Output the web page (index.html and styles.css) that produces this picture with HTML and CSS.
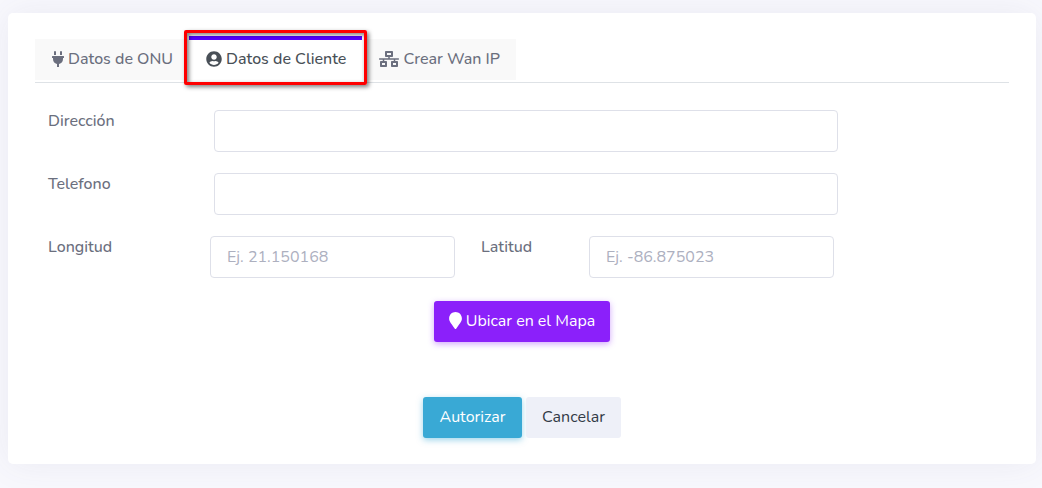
FILE: index.html
```html
<!DOCTYPE html>
<html lang="es">
  <head>
    <meta charset="UTF-8" />
    <meta name="viewport" content="width=device-width, initial-scale=1.0" />
    <title>Datos de Cliente</title>
    <link rel="stylesheet" href="styles.css">
  </head>
  <body>
    <main class="card">
      <nav class="tabs">
        <a class="tab" href="#onu">
          <svg class="icon" width="12" height="16" viewBox="0 0 384 512"><path d="M320,32a32,32,0,0,0-64,0v96h64Zm48,128H16A16,16,0,0,0,0,176v32a16,16,0,0,0,16,16H32v32A160.07,160.07,0,0,0,160,412.8V512h64V412.8A160.07,160.07,0,0,0,352,256V224h16a16,16,0,0,0,16-16V176A16,16,0,0,0,368,160ZM128,32a32,32,0,0,0-64,0v96h64Z"/></svg>
          Datos de ONU
        </a>
        <a class="tab active" href="#cliente">
          <svg class="icon" width="16" height="16" viewBox="0 0 496 512"><path d="M248 8C111 8 0 119 0 256s111 248 248 248 248-111 248-248S385 8 248 8zm0 96c48.6 0 88 39.4 88 88s-39.4 88-88 88-88-39.4-88-88 39.4-88 88-88zm0 344c-58.7 0-111.3-26.6-146.5-68.2 18.8-35.4 55.6-59.8 98.5-59.8 2.4 0 4.8.4 7.1 1.1 13 4.2 26.6 6.9 40.9 6.9 14.3 0 28-2.7 40.9-6.9 2.3-.7 4.7-1.1 7.1-1.1 42.9 0 79.7 24.4 98.5 59.8C359.3 421.4 306.7 448 248 448z"/></svg>
          Datos de Cliente
        </a>
        <a class="tab" href="#wan">
          <svg class="icon" width="20" height="16" viewBox="0 0 640 512"><path d="M640 264v-16c0-8.84-7.16-16-16-16H344v-40h72c17.67 0 32-14.33 32-32V32c0-17.67-14.33-32-32-32H224c-17.67 0-32 14.33-32 32v128c0 17.67 14.33 32 32 32h72v40H16c-8.84 0-16 7.16-16 16v16c0 8.84 7.16 16 16 16h104v40H64c-17.67 0-32 14.33-32 32v128c0 17.67 14.33 32 32 32h160c17.67 0 32-14.33 32-32V352c0-17.67-14.33-32-32-32h-56v-40h304v40h-56c-17.67 0-32 14.33-32 32v128c0 17.67 14.33 32 32 32h160c17.67 0 32-14.33 32-32V352c0-17.67-14.33-32-32-32h-56v-40h104c8.84 0 16-7.16 16-16zM256 128V64h128v64H256zm-64 320H96v-64h96v64zm352 0h-96v-64h96v64z"/></svg>
          Crear Wan IP
        </a>
      </nav>

      <form class="form">
        <div class="row">
          <label for="direccion">Dirección</label>
          <input type="text" id="direccion" />
        </div>
        <div class="row">
          <label for="telefono">Telefono</label>
          <input type="text" id="telefono" />
        </div>
        <div class="row row-coords">
          <label for="longitud">Longitud</label>
          <input type="text" id="longitud" placeholder="Ej. 21.150168" />
          <label class="latitud" for="latitud">Latitud</label>
          <input type="text" id="latitud" placeholder="Ej. -86.875023" />
        </div>
        <div class="map-action">
          <button type="button" class="btn btn-map">
            <svg class="icon" width="13" height="17" viewBox="0 0 384 512"><path d="M172.268 501.67C26.97 291.031 0 269.413 0 192 0 85.961 85.961 0 192 0s192 85.961 192 192c0 77.413-26.97 99.031-172.268 309.67-9.535 13.774-29.93 13.773-39.464 0z"/></svg>
            Ubicar en el Mapa
          </button>
        </div>
        <div class="actions">
          <button type="button" class="btn btn-info">Autorizar</button>
          <button type="button" class="btn btn-light">Cancelar</button>
        </div>
      </form>
    </main>
  </body>
</html>
```
FILE: styles.css
```css
* {
  box-sizing: border-box;
}

body {
  margin: 0;
  padding: 13px 6px 24px 8px;
  background-color: #f8f8fd;
  font-family: Nunito, Lato, sans-serif;
  font-size: 16px;
  line-height: 24px;
  color: #6c757d;
}

.card {
  padding: 23px 27px 26px;
  background-color: #fff;
  border-radius: 5px;
  box-shadow: 0 0 35px rgba(80, 80, 120, 0.08);
}

.icon {
  flex: none;
  fill: currentColor;
}

/* Tabs */
.tabs {
  display: flex;
  align-items: flex-end;
  border-bottom: 1px solid #dee2e6;
}

.tab {
  display: flex;
  align-items: center;
  gap: 4px;
  min-width: 151px;
  height: 41px;
  margin-bottom: 2px;
  padding: 0 16px 2px 17px;
  background-color: #f9f9f9;
  color: #6b6f7e;
  font-weight: 500;
  white-space: nowrap;
  text-decoration: none;
}

.tab.active {
  position: relative;
  min-width: 173px;
  height: 46px;
  margin-bottom: 0;
  padding-bottom: 4px;
  border-top: 4px solid #5500ff;
  background-color: #fff;
  color: #495057;
}

.tab.active::after {
  content: "";
  position: absolute;
  inset: -10px -5px -3px;
  border: 3px solid #fe0000;
  border-radius: 2px;
  box-shadow: 2px 2px 4px rgba(0, 0, 0, 0.5), inset 2px 2px 4px rgba(0, 0, 0, 0.5);
}

/* Form */
.form {
  padding: 27px 0 0 13px;
}

.row {
  display: grid;
  grid-template-columns: 166fr 624fr 171fr;
  margin-bottom: 21px;
}

.row-coords {
  grid-template-columns: 162fr 245fr 134fr 245fr 175fr;
}

label {
  line-height: 22px;
  color: #6b6f7e;
  font-weight: 500;
}

.latitud {
  padding-left: 26px;
}

input {
  width: 100%;
  min-width: 0;
  height: 42px;
  padding: 0 16px;
  border: 1px solid #dee0e9;
  border-radius: 4px;
  background-color: #fff;
  font: inherit;
  color: #6c757d;
}

input::placeholder {
  color: #adb0bf;
  opacity: 1;
}

/* Buttons */
.map-action,
.actions {
  display: flex;
  justify-content: center;
  gap: 4px;
  padding-right: 13px;
}

.map-action {
  margin-top: 23px;
}

.actions {
  margin-top: 55px;
}

.btn {
  display: flex;
  align-items: center;
  justify-content: center;
  gap: 4px;
  height: 41px;
  padding: 0 15px 2px;
  border: 0;
  border-radius: 3px;
  font: inherit;
  cursor: pointer;
}

.btn-map {
  min-width: 176px;
  background-color: #8b20fa;
  color: #fff;
  box-shadow: 0 2px 6px rgba(139, 32, 250, 0.4);
}

.btn-info {
  min-width: 99px;
  background-color: #39a9d5;
  color: #fff;
  box-shadow: 0 2px 6px rgba(57, 169, 213, 0.5);
}

.btn-light {
  min-width: 95px;
  background-color: #eef0f8;
  color: #323a46;
}
```
